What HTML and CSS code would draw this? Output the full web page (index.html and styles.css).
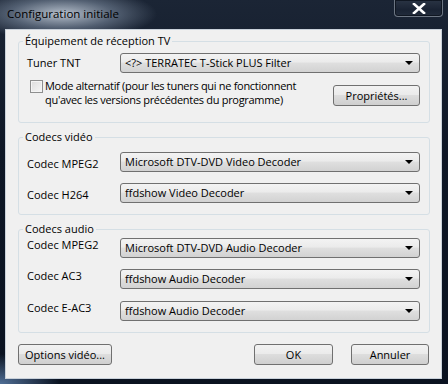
FILE: index.html
```html
<html>
<head>
<meta charset="utf-8">
<title>Configuration initiale</title>
<link rel="stylesheet" href="styles.css">
</head>
<body>
<div class="window">
  <div class="titlebar">
    <span class="title">Configuration initiale</span>
    <span class="close-btn">
      <svg width="14" height="11" viewBox="0 0 14 11">
        <path d="M2 1 L12 10 M12 1 L2 10" stroke="#fff" stroke-width="2.6" stroke-linecap="square"/>
      </svg>
    </span>
  </div>
  <div class="client">
    <fieldset class="group group-tv">
      <legend>Équipement de réception TV</legend>
      <div class="row">
        <span class="label">Tuner TNT</span>
        <div class="combo">&lt;?&gt; TERRATEC T-Stick PLUS Filter</div>
      </div>
      <div class="check-row">
        <span class="checkbox"></span>
        <span class="check-text">Mode alternatif (pour les tuners qui ne fonctionnent<br>qu'avec les versions précédentes du programme)</span>
        <span class="btn btn-props">Propriétés...</span>
      </div>
    </fieldset>

    <fieldset class="group group-video">
      <legend>Codecs vidéo</legend>
      <div class="row">
        <span class="label">Codec MPEG2</span>
        <div class="combo">Microsoft DTV-DVD Video Decoder</div>
      </div>
      <div class="row">
        <span class="label">Codec H264</span>
        <div class="combo">ffdshow Video Decoder</div>
      </div>
    </fieldset>

    <fieldset class="group group-audio">
      <legend>Codecs audio</legend>
      <div class="row">
        <span class="label">Codec MPEG2</span>
        <div class="combo">Microsoft DTV-DVD Audio Decoder</div>
      </div>
      <div class="row">
        <span class="label">Codec AC3</span>
        <div class="combo">ffdshow Audio Decoder</div>
      </div>
      <div class="row row-tall">
        <span class="label">Codec E-AC3</span>
        <div class="combo">ffdshow Audio Decoder</div>
      </div>
    </fieldset>

    <div class="buttons">
      <span class="btn btn-options">Options vidéo...</span>
      <span class="spacer"></span>
      <span class="btn btn-ok">OK</span>
      <span class="btn btn-cancel">Annuler</span>
    </div>
  </div>
</div>
</body>
</html>
```

FILE: styles.css
```css
body {
  margin: 0;
  padding: 0;
  background: #0d1522;
  font-family: "Open Sans", "Liberation Sans", sans-serif;
  font-size: 11px;
  color: #000;
}

/* Aero frame */
.window {
  width: 448px;
  height: 384px;
  display: flex;
  flex-direction: column;
  background:
    radial-gradient(ellipse 95px 26px at 62px 14px, rgba(190, 200, 212, 0.95), rgba(120, 135, 155, 0.6) 55%, rgba(30, 42, 60, 0) 100%),
    radial-gradient(ellipse 60px 30px at 0px 384px, rgba(110, 150, 200, 0.7), rgba(0, 0, 0, 0) 100%),
    linear-gradient(180deg, #1b2535 0%, #0e1726 40%, #0a1220 100%);
}

.titlebar {
  height: 29px;
  display: flex;
  align-items: flex-start;
  justify-content: space-between;
}
.title {
  margin: 6px 0 0 7px;
  line-height: 16px;
  font-size: 11.5px;
  color: #000;
}
.close-btn {
  width: 47px;
  height: 16px;
  margin-right: 5px;
  border: 1px solid #6d7683;
  border-top: none;
  border-radius: 0 0 4px 4px;
  background: linear-gradient(180deg, #2a3444 0%, #1a2333 60%, #222c3c 100%);
  box-shadow: inset 0 0 0 1px #101722;
  display: flex;
  align-items: center;
  justify-content: center;
}

.client {
  flex: 1;
  margin: 0 6px 5px 5px;
  background: #f0f0f0;
  border: 1px solid #c9d1da;
  display: flex;
  flex-direction: column;
}

/* Group boxes */
.group {
  margin: 0 11px 0 12px;
  padding: 0 9px 0 8px;
  border: 1px solid #d5dfe5;
  border-radius: 3px;
}
.group legend {
  padding: 0 2px;
  margin-left: -4px;
  line-height: 14px;
}
.group-tv {
  margin-top: 4px;
  padding-top: 5px;
  padding-bottom: 15px;
}
.group-video {
  margin-top: 7px;
  padding-top: 8px;
  padding-bottom: 11px;
}
.group-audio {
  margin-top: 7px;
  padding-top: 2px;
  padding-bottom: 11px;
}

.row {
  display: grid;
  grid-template-columns: 93px 1fr;
  align-items: start;
}
.row + .row {
  margin-top: 11px;
}
.row + .row-tall {
  margin-top: 12px;
}
.label {
  line-height: 14px;
  padding: 3px 0 0 0;
  white-space: nowrap;
}
.group-video .label {
  padding-top: 5px;
}
.group-audio .label {
  padding-top: 0;
}

/* Combo boxes */
.combo {
  height: 18px;
  line-height: 18px;
  border: 1px solid #707070;
  border-radius: 3px;
  padding: 0 4px;
  background: linear-gradient(180deg, #f3f3f3 0%, #ebebeb 45%, #dfdfdf 50%, #d2d2d2 100%);
  white-space: nowrap;
  position: relative;
}
.combo::after {
  content: "";
  position: absolute;
  right: 6px;
  top: 7px;
  border-left: 4px solid transparent;
  border-right: 4px solid transparent;
  border-top: 4px solid #000;
}

/* Checkbox line */
.check-row {
  display: flex;
  align-items: flex-start;
  margin-top: 6px;
}
.checkbox {
  width: 11px;
  height: 11px;
  margin: 1px 2px 0 3px;
  border: 1px solid #8e8f8f;
  background: linear-gradient(135deg, #dcdcdc 0%, #f6f6f6 100%);
  box-shadow: inset 0 0 0 1px #f4f4f4;
}
.check-text {
  line-height: 14px;
  letter-spacing: -0.3px;
  flex: 1;
  white-space: nowrap;
}

/* Push buttons */
.btn {
  box-sizing: border-box;
  height: 21px;
  line-height: 19px;
  text-align: center;
  border: 1px solid #707070;
  border-radius: 3px;
  background: linear-gradient(180deg, #f2f2f2 0%, #ebebeb 45%, #dddddd 50%, #cfcfcf 100%);
}
.btn-props {
  width: 87px;
  margin-top: 6px;
}

.buttons {
  display: flex;
  gap: 18px;
  margin: 11px 12px 0 12px;
}
.spacer {
  flex: 1;
}
.btn-options {
  width: 94px;
}
.btn-ok {
  width: 79px;
}
.btn-cancel {
  width: 78px;
}
```
